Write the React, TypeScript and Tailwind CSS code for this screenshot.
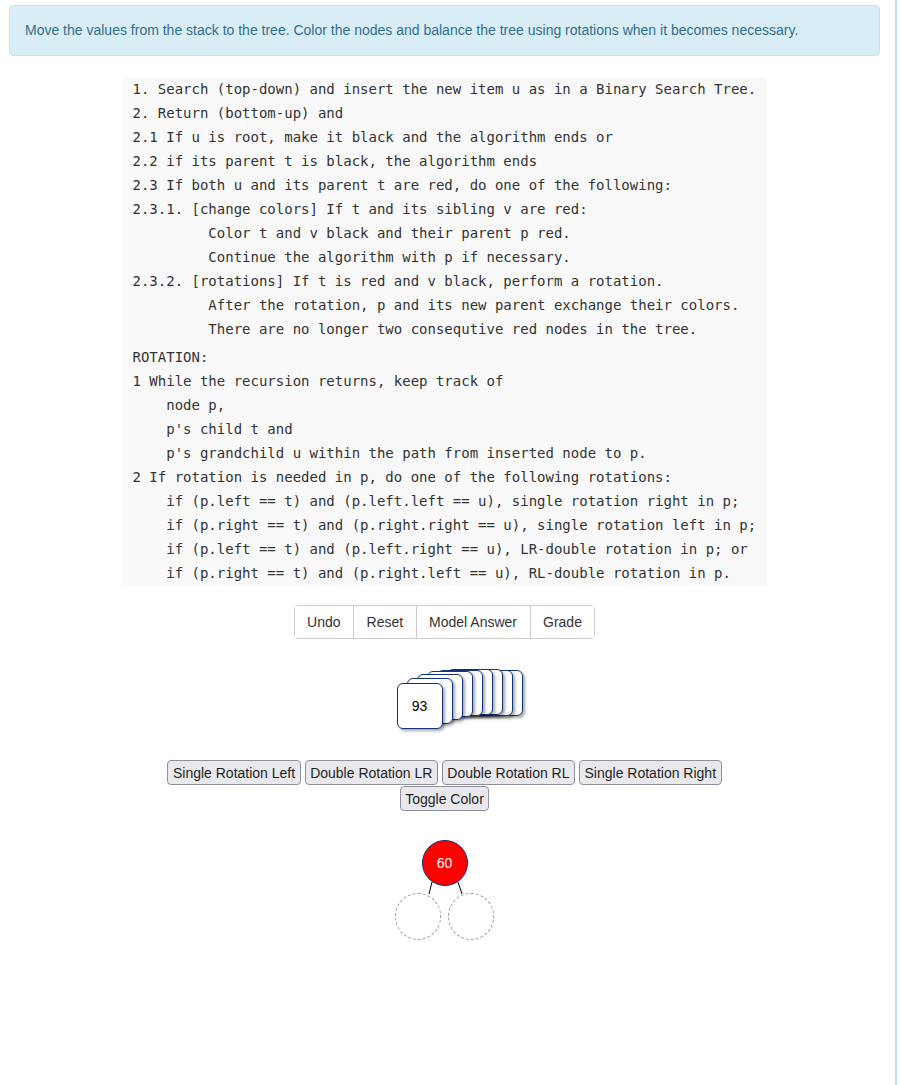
import React from 'react';

const algorithm = [
  '1. Search (top-down) and insert the new item u as in a Binary Search Tree.',
  '2. Return (bottom-up) and',
  '2.1 If u is root, make it black and the algorithm ends or',
  '2.2 if its parent t is black, the algorithm ends',
  '2.3 If both u and its parent t are red, do one of the following:',
  '2.3.1. [change colors] If t and its sibling v are red:',
  '         Color t and v black and their parent p red.',
  '         Continue the algorithm with p if necessary.',
  '2.3.2. [rotations] If t is red and v black, perform a rotation.',
  '         After the rotation, p and its new parent exchange their colors.',
  '         There are no longer two consequtive red nodes in the tree.',
];

const rotation = [
  'ROTATION:',
  '1 While the recursion returns, keep track of',
  '    node p,',
  "    p's child t and",
  "    p's grandchild u within the path from inserted node to p.",
  '2 If rotation is needed in p, do one of the following rotations:',
  '    if (p.left == t) and (p.left.left == u), single rotation right in p;',
  '    if (p.right == t) and (p.right.right == u), single rotation left in p;',
  '    if (p.left == t) and (p.left.right == u), LR-double rotation in p; or',
  '    if (p.right == t) and (p.right.left == u), RL-double rotation in p.',
];

// back to front
const stack = [
  { left: 80, top: 1 },
  { left: 70, top: 1 },
  { left: 60, top: 0 },
  { left: 50, top: 0 },
  { left: 40, top: 1 },
  { left: 30, top: 2 },
  { left: 20, top: 5 },
  { left: 10, top: 9 },
  { left: 0, top: 14 },
];

const groupButtons = ['Undo', 'Reset', 'Model Answer', 'Grade'];

function RotButton({ label }: { label: string }) {
  return (
    <button className="h-[25px] px-[4.5px] bg-[#e9e9ed] border border-[#8f8f9d] rounded-[4px] text-[14px] leading-[16px] text-[#1f1f1f]">
      {label}
    </button>
  );
}

export default function App() {
  return (
    <div className="flex min-h-[1085px] bg-white" style={{ fontFamily: '"Liberation Sans", Arial, sans-serif' }}>
      <main className="w-[889px] shrink-0 flex flex-col items-center">
        <div className="mt-[5px] ml-[9px] self-start w-[871px] px-[15px] py-[15px] bg-[#d9edf7] border border-[#bce8f1] rounded-[4px] text-[14px] leading-[19px] text-[#31708f]">
          Move the values from the stack to the tree. Color the nodes and balance the tree using rotations when it becomes necessary.
        </div>

        <div
          className="mt-[21px] w-[644px] bg-[#f9f9f9] pl-[10px] text-[14px] leading-[24px] text-[#333] whitespace-pre"
          style={{ fontFamily: '"DejaVu Sans Mono", monospace' }}
        >
          <div>{algorithm.join('\n')}</div>
          <div className="mt-[4px]">{rotation.join('\n')}</div>
        </div>

        <div className="mt-[20px] flex border border-[#ccc] rounded-[4px] text-[14px] text-[#333]">
          {groupButtons.map((b, i) => (
            <button key={b} className={`h-[32px] px-[12.5px] bg-white leading-[20px] ${i > 0 ? 'border-l border-[#ccc]' : ''}`}>
              {b}
            </button>
          ))}
        </div>

        <div className="relative mt-[30px] w-[127px] h-[62px] ml-[31px]">
          {stack.map((c, i) => (
            <div
              key={i}
              className="absolute w-[46px] h-[46px] bg-white border border-[#12357a] rounded-[6px] shadow-[2px_2px_3px_rgba(0,0,0,0.35)] flex items-center justify-center text-[14px] text-black"
              style={{ left: c.left, top: c.top }}
            >
              {i === stack.length - 1 ? '93' : ''}
            </div>
          ))}
        </div>

        <div className="mt-[29px] flex flex-col items-center gap-[1px]">
          <div className="flex gap-[4px]">
            <RotButton label="Single Rotation Left" />
            <RotButton label="Double Rotation LR" />
            <RotButton label="Double Rotation RL" />
            <RotButton label="Single Rotation Right" />
          </div>
          <RotButton label="Toggle Color" />
        </div>

        <div className="relative mt-[29px] w-[100px] h-[102px]">
          <svg className="absolute left-0 top-0" width="100" height="102">
            <line x1="37" y1="42" x2="34" y2="54" stroke="#000" strokeWidth="1" />
            <line x1="63" y1="42" x2="67" y2="54" stroke="#000" strokeWidth="1" />
          </svg>
          <div className="absolute left-[27px] top-0 w-[46px] h-[46px] rounded-full bg-[#ff0000] border border-[#1a2a6b] flex items-center justify-center text-[14px] text-white">
            60
          </div>
          <div className="absolute left-0 top-[53px] w-[46px] h-[47px] rounded-full bg-white border border-dashed border-[#999]" />
          <div className="absolute left-[53px] top-[53px] w-[46px] h-[47px] rounded-full bg-white border border-dashed border-[#999]" />
        </div>
      </main>
      <div className="ml-[6px] w-[2px] bg-[#b6e4f0]" />
    </div>
  );
}
